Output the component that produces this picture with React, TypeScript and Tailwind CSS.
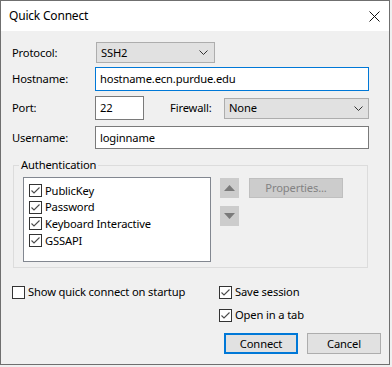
import React from "react";

const font = { fontFamily: '"Noto Sans", "Segoe UI", sans-serif' };

function Check({ checked }: { checked: boolean }) {
  return (
    <span className="w-[13px] h-[13px] border border-[#333333] bg-white flex items-center justify-center shrink-0">
      {checked && (
        <svg width="11" height="11" viewBox="0 0 11 11">
          <path d="M1.5 5.5 L4 8 L9.5 2.5" fill="none" stroke="#4a4a4a" strokeWidth="1.1" />
        </svg>
      )}
    </span>
  );
}

function Chevron() {
  return (
    <svg width="9" height="5" viewBox="0 0 9 5">
      <path d="M0.5 0.5 L4.5 4.5 L8.5 0.5" fill="none" stroke="#333" strokeWidth="1" />
    </svg>
  );
}

export default function App() {
  return (
    <div className="w-[392px] h-[367px] bg-[#f0f0f0] text-[11.2px] tracking-[-0.15px] text-black leading-none" style={font}>
      <div className="w-[390px] h-[365px] border border-[#6f6f6f] bg-[#f0f0f0] flex flex-col">
        {/* title bar */}
        <div className="h-[30px] bg-white flex items-center justify-between pl-[8px] pr-[9px]">
          <span className="text-[12px] tracking-[-0.2px]">Quick Connect</span>
          <svg width="11" height="11" viewBox="0 0 11 11">
            <path d="M0.5 0.5 L10.5 10.5 M10.5 0.5 L0.5 10.5" stroke="#111" strokeWidth="1" />
          </svg>
        </div>

        <div className="flex flex-col pl-[11px]">
          {/* Protocol */}
          <div className="flex items-center mt-[11px] h-[21px]">
            <span className="w-[84px]">Protocol:</span>
            <div className="w-[119px] h-[21px] bg-[#e1e1e1] border border-[#adadad] flex items-center justify-between pl-[4px] pr-[6px]">
              <span>SSH2</span>
              <Chevron />
            </div>
          </div>

          {/* Hostname */}
          <div className="flex items-center mt-[4px] h-[24px]">
            <span className="w-[83px]">Hostname:</span>
            <div className="w-[274px] h-[24px] bg-white border border-[#0078d7] flex items-center pl-[4px]">
              hostname.ecn.purdue.edu
            </div>
          </div>

          {/* Port / Firewall */}
          <div className="flex items-center mt-[5px] h-[24px]">
            <span className="w-[83px]">Port:</span>
            <div className="w-[49px] h-[24px] bg-white border border-[#7a7a7a] flex items-center pl-[4px]">22</div>
            <span className="w-[80px] pl-[26px] shrink-0">Firewall:</span>
            <div className="w-[145px] h-[21px] bg-[#e1e1e1] border border-[#adadad] flex items-center justify-between pl-[4px] pr-[5px]">
              <span>None</span>
              <Chevron />
            </div>
          </div>

          {/* Username */}
          <div className="flex items-center mt-[6px] h-[23px]">
            <span className="w-[83px]">Username:</span>
            <div className="w-[274px] h-[23px] bg-white border border-[#7a7a7a] flex items-center pl-[4px]">loginname</div>
          </div>

          {/* Authentication group */}
          <div className="relative ml-[1px] mt-[16px] w-[355px] h-[103px] border border-[#dcdcdc]">
            <span className="absolute left-[5px] top-[-7px] bg-[#f0f0f0] px-[2px]">Authentication</span>
            <div className="flex mt-[11px] ml-[9px]">
              <div className="w-[188px] h-[85px] bg-white border border-[#828790] flex flex-col pl-[5px] pt-[4px]">
                {["PublicKey", "Password", "Keyboard Interactive", "GSSAPI"].map((t) => (
                  <div key={t} className="flex items-center h-[16.7px] gap-[3px]">
                    <Check checked />
                    <span>{t}</span>
                  </div>
                ))}
              </div>
              <div className="flex flex-col ml-[9px] mt-[1px] gap-[8px]">
                <div className="w-[19px] h-[20px] bg-[#cccccc] flex items-center justify-center">
                  <svg width="11" height="6" viewBox="0 0 11 6">
                    <path d="M0 6 L5.5 0 L11 6 Z" fill="#7a7a7a" />
                  </svg>
                </div>
                <div className="w-[19px] h-[20px] bg-[#cccccc] flex items-center justify-center">
                  <svg width="11" height="6" viewBox="0 0 11 6">
                    <path d="M0 0 L5.5 6 L11 0 Z" fill="#7a7a7a" />
                  </svg>
                </div>
              </div>
              <div className="ml-[10px] mt-[1px] w-[94px] h-[20px] bg-[#cccccc] border border-[#bfbfbf] flex items-center justify-center text-[#838383]">
                Properties...
              </div>
            </div>
          </div>

          {/* bottom options */}
          <div className="flex mt-[18px]">
            <div className="w-[207px] flex items-start gap-[3px]">
              <Check checked={false} />
              <span className="mt-[0px]">Show quick connect on startup</span>
            </div>
            <div className="flex flex-col gap-[10px]">
              <div className="flex items-start gap-[3px]">
                <Check checked />
                <span className="mt-[0px]">Save session</span>
              </div>
              <div className="flex items-start gap-[3px]">
                <Check checked />
                <span className="mt-[0px]">Open in a tab</span>
              </div>
            </div>
          </div>

          {/* buttons */}
          <div className="flex mt-[11px] ml-[212px] gap-[9px]">
            <div className="w-[74px] h-[21px] bg-[#e1e1e1] border-2 border-[#0078d7] flex items-center justify-center">Connect</div>
            <div className="w-[74px] h-[21px] bg-[#e1e1e1] border border-[#adadad] flex items-center justify-center">Cancel</div>
          </div>
        </div>
      </div>
    </div>
  );
}
